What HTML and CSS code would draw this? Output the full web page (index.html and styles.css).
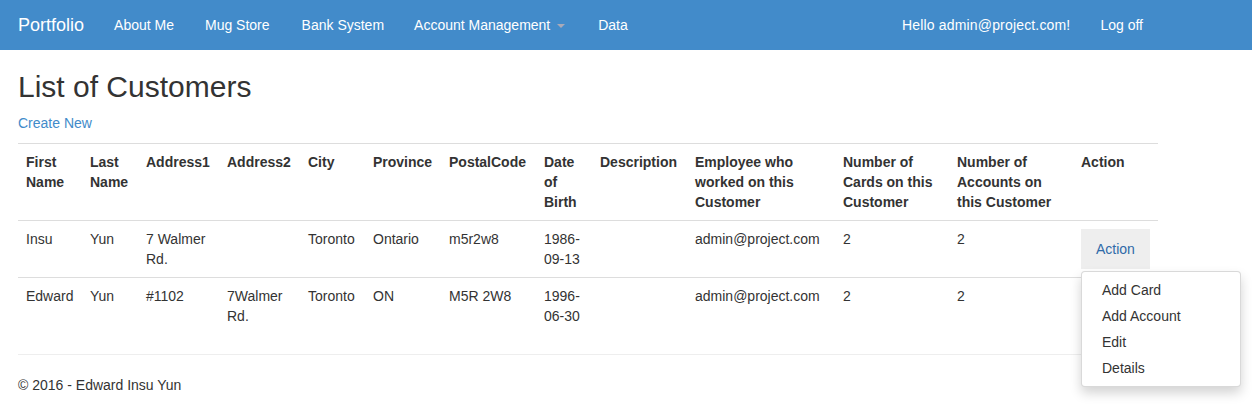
FILE: index.html
```html
<!DOCTYPE html>
<html lang="en">
<head>
<meta charset="utf-8">
<title>List of Customers</title>
<link rel="stylesheet" href="styles.css">
</head>
<body>
<nav class="navbar">
  <div class="navbar-inner">
    <a class="brand" href="#">Portfolio</a>
    <ul class="nav">
      <li><a class="n-about" href="#">About Me</a></li>
      <li><a class="n-mug" href="#">Mug Store</a></li>
      <li><a class="n-bank" href="#">Bank System</a></li>
      <li><a class="n-acct" href="#">Account Management <span class="caret"></span></a></li>
      <li><a href="#">Data</a></li>
    </ul>
    <ul class="nav nav-right">
      <li><a class="n-hello" href="#">Hello admin@project.com!</a></li>
      <li><a href="#">Log off</a></li>
    </ul>
  </div>
</nav>
<main class="body-content">
  <h2 class="title">List of Customers</h2>
  <p class="create"><a href="#">Create New</a></p>
  <table class="table">
    <colgroup>
      <col class="c1"><col class="c2"><col class="c3"><col class="c4"><col class="c5"><col class="c6"><col class="c7"><col class="c8"><col class="c9"><col class="c10"><col class="c11"><col class="c12"><col class="c13">
    </colgroup>
    <thead>
      <tr>
        <th>First Name</th>
        <th>Last Name</th>
        <th>Address1</th>
        <th>Address2</th>
        <th>City</th>
        <th>Province</th>
        <th>PostalCode</th>
        <th>Date of Birth</th>
        <th>Description</th>
        <th>Employee who worked on this Customer</th>
        <th>Number of Cards on this Customer</th>
        <th>Number of Accounts on this Customer</th>
        <th>Action</th>
      </tr>
    </thead>
    <tbody>
      <tr>
        <td>Insu</td>
        <td>Yun</td>
        <td>7 Walmer Rd.</td>
        <td></td>
        <td>Toronto</td>
        <td>Ontario</td>
        <td>m5r2w8</td>
        <td>1986-09-13</td>
        <td></td>
        <td>admin@project.com</td>
        <td>2</td>
        <td>2</td>
        <td>
          <div class="dropdown">
            <a class="dropdown-toggle open" href="#">Action</a>
            <ul class="dropdown-menu">
              <li><a href="#">Add Card</a></li>
              <li><a href="#">Add Account</a></li>
              <li><a href="#">Edit</a></li>
              <li><a href="#">Details</a></li>
            </ul>
          </div>
        </td>
      </tr>
      <tr>
        <td>Edward</td>
        <td>Yun</td>
        <td>#1102</td>
        <td>7Walmer Rd.</td>
        <td>Toronto</td>
        <td>ON</td>
        <td>M5R 2W8</td>
        <td>1996-06-30</td>
        <td></td>
        <td>admin@project.com</td>
        <td>2</td>
        <td>2</td>
        <td>
          <div class="dropdown">
            <a class="dropdown-toggle" href="#">Action</a>
          </div>
        </td>
      </tr>
    </tbody>
  </table>
  <hr class="rule">
  <footer class="footer">
    <p>&copy; 2016 - Edward Insu Yun</p>
  </footer>
</main>
</body>
</html>
```

FILE: styles.css
```css
* { box-sizing: border-box; }

html, body {
  margin: 0;
  padding: 0;
}

body {
  font-family: "Liberation Sans", Arial, Helvetica, sans-serif;
  font-size: 14px;
  line-height: 20px;
  color: #333;
  background: #fff;
  width: 1252px;
  height: 404px;
  overflow: hidden;
}

a {
  text-decoration: none;
  color: #428bca;
}

/* navbar */
.navbar {
  height: 50px;
  background: #428bca;
}

.navbar-inner {
  display: flex;
  align-items: stretch;
  width: 1155px;
  height: 50px;
  margin-left: 3px;
}

.brand {
  display: block;
  padding: 15px;
  font-size: 18px;
  line-height: 20px;
  color: #fff;
  height: 50px;
}

.nav {
  display: flex;
  list-style: none;
  margin: 0;
  padding: 0;
}

.nav a {
  display: block;
  padding: 15px;
  line-height: 20px;
  color: #fff;
}

.nav .n-about { padding-right: 16px; }
.nav .n-mug { padding-right: 17px; }
.nav .n-acct { padding-right: 18px; }
.nav .n-hello { letter-spacing: 0.17px; padding-left: 11px; }

.nav-right {
  margin-left: auto;
}

.caret {
  display: inline-block;
  width: 0;
  height: 0;
  margin-left: 3px;
  vertical-align: middle;
  border-top: 4px solid #a9aab8;
  border-left: 4px solid transparent;
  border-right: 4px solid transparent;
}

/* content */
.body-content {
  padding: 0 15px 0 18px;
  width: 1173px;
}

.title {
  margin: 20px 0 10px;
  font-size: 30px;
  font-weight: 500;
  line-height: 33px;
  color: #333;
}

.create {
  margin: 0 0 10px;
}

/* table */
.table {
  width: 1140px;
  table-layout: fixed;
  border-collapse: collapse;
  border-spacing: 0;
  margin-bottom: 20px;
}

.c1 { width: 64px; }
.c2 { width: 56px; }
.c3 { width: 81px; }
.c4 { width: 81px; }
.c5 { width: 65px; }
.c6 { width: 76px; }
.c7 { width: 95px; }
.c8 { width: 56px; }
.c9 { width: 95px; }
.c10 { width: 148px; }
.c11 { width: 114px; }
.c12 { width: 124px; }
.c13 { width: 85px; }

.table th,
.table td {
  padding: 8px;
  text-align: left;
  vertical-align: top;
  border-top: 1px solid #ddd;
  line-height: 20px;
}

.table th {
  font-weight: bold;
  border-bottom: 1px solid #ddd;
}

.table tbody tr:first-child td {
  border-top: 0;
}

/* dropdown */
.dropdown {
  position: relative;
}

.dropdown-toggle {
  display: inline-block;
  padding: 10px 15px;
  line-height: 20px;
  color: #2f6aa8;
}

.dropdown-toggle.open {
  background: #eee;
}

.dropdown-menu {
  position: absolute;
  top: 100%;
  left: 0;
  z-index: 10;
  min-width: 160px;
  margin: 2px 0 0;
  padding: 5px 0;
  list-style: none;
  background: #fff;
  border: 1px solid rgba(0, 0, 0, 0.15);
  border-radius: 4px;
  box-shadow: 0 6px 12px rgba(0, 0, 0, 0.175);
}

.dropdown-menu a {
  display: block;
  padding: 3px 20px;
  line-height: 20px;
  color: #333;
  white-space: nowrap;
}

/* footer */
.rule {
  margin: 0 0 20px;
  width: 1140px;
  border: 0;
  border-top: 1px solid #eee;
}

.footer p {
  margin: 0 0 10px;
}
```
